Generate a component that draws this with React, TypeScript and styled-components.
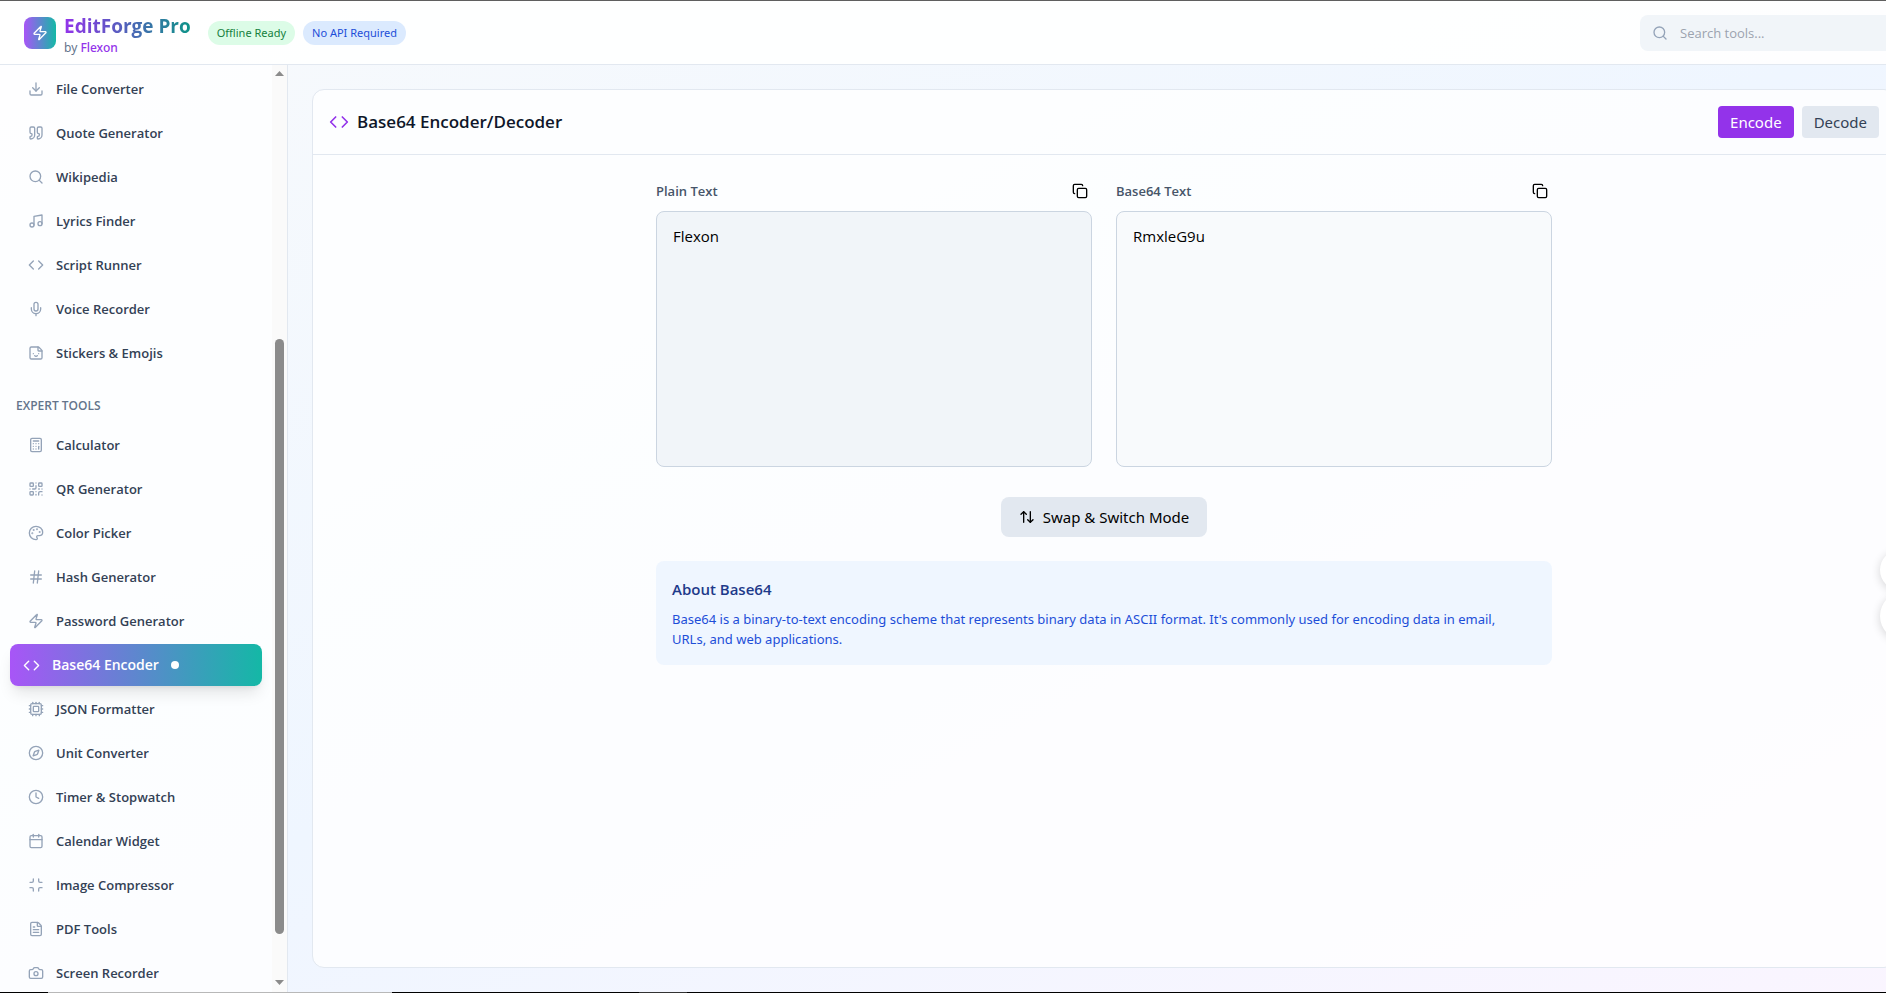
import React, { useState } from "react";
import styled, { createGlobalStyle, css } from "styled-components";
import {
  ArrowUpDown,
  Calculator,
  Calendar,
  Camera,
  Clock,
  Code,
  Compass,
  Copy,
  Cpu,
  Download,
  FileText,
  Hash,
  Mic,
  Minimize,
  Music,
  Palette,
  QrCode,
  Quote,
  Search,
  Sticker,
  Zap,
  type LucideIcon,
} from "lucide-react";

const headingFont = `"Segoe UI", "Open Sans", "Noto Sans", sans-serif`;
const textFont = `"Segoe UI", "Noto Sans", "Open Sans", sans-serif`;

const GlobalStyle = createGlobalStyle`
  *, *::before, *::after { box-sizing: border-box; }
  body {
    margin: 0;
    overflow: hidden;
    font-family: ${headingFont};
    font-size: 15px;
    line-height: 24px;
    color: #0f172a;
  }
  button, input, textarea { font: inherit; color: inherit; }
  button { border: 0; cursor: pointer; }
  h1, h2, h3, p, ul { margin: 0; padding: 0; }
  ul { list-style: none; }
  svg { flex: none; display: block; }
`;

const Viewport = styled.div`
  position: relative;
  height: 100vh;
  overflow: hidden;
  display: flex;
  flex-direction: column;
  border-top: 1px solid #5f5f5f;
`;

/* The application is a little wider than the window that shows it. */
const Shell = styled.div`
  width: calc(100% + 34px);
  flex: 1;
  min-height: 0;
  display: flex;
  flex-direction: column;
  background: linear-gradient(to bottom right, #f8fafc, #eff6ff, #faf5ff);
`;

const Header = styled.header`
  flex: none;
  height: 64px;
  padding: 0 24px;
  display: flex;
  align-items: center;
  justify-content: space-between;
  background: rgba(255, 255, 255, 0.9);
  border-bottom: 1px solid #e2e8f0;
`;

const Brand = styled.div`
  display: flex;
  align-items: center;
  gap: 17px;
`;

const BrandName = styled.div`
  display: flex;
  align-items: center;
  gap: 8px;
`;

const BrandText = styled.div`
  padding-top: 2px;
`;

const Logo = styled.div`
  width: 32px;
  height: 32px;
  display: grid;
  place-items: center;
  border-radius: 8px;
  color: #fff;
  background: linear-gradient(to right, #a855f7, #14b8a6);
`;

const Title = styled.h1`
  font-size: 19px;
  line-height: 28px;
  font-weight: 700;
  color: transparent;
  background: linear-gradient(to right, #9333ea, #0d9488);
  background-clip: text;
  -webkit-background-clip: text;
`;

const Byline = styled.p`
  font-family: ${textFont};
  font-size: 12px;
  line-height: 16px;
  color: #64748b;
`;

const Author = styled.span`
  font-weight: 500;
  color: #9333ea;
`;

const Badges = styled.div`
  display: flex;
  gap: 8px;
`;

const Badge = styled.span<{ $tone: "green" | "blue" }>`
  padding: 4px 9px;
  border-radius: 12px;
  font-family: ${textFont};
  font-size: 11px;
  line-height: 16px;
  ${(p) =>
    p.$tone === "green"
      ? css`background: #dcfce7; color: #15803d;`
      : css`background: #dbeafe; color: #1d4ed8;`}
`;

const SearchBox = styled.label`
  width: 256px;
  height: 36px;
  padding: 0 12px;
  display: flex;
  align-items: center;
  gap: 12px;
  border-radius: 8px;
  background: #f1f5f9;
  color: #94a3b8;
`;

const SearchInput = styled.input`
  flex: 1;
  min-width: 0;
  padding: 0;
  border: 0;
  outline: 0;
  background: transparent;
  color: #0f172a;
  font-size: 13px;
  line-height: 20px;
  &::placeholder { color: #9ca3af; opacity: 1; }
`;

const Body = styled.div`
  flex: 1;
  min-height: 0;
  display: flex;
`;

const Sidebar = styled.aside`
  flex: none;
  width: 288px;
  display: flex;
  overflow: hidden;
  background: rgba(255, 255, 255, 0.8);
  border-right: 1px solid #e2e8f0;
`;

const Nav = styled.nav`
  flex: 1;
  padding: 4px 16px 0;
`;

const NavList = styled.ul`
  display: flex;
  flex-direction: column;
  gap: 4px;
`;

const NavHeading = styled.h3`
  margin: 25px 0 11px;
  font-size: 12px;
  line-height: 16px;
  font-weight: 600;
  text-transform: uppercase;
  color: #64748b;
`;

const NavButton = styled.button<{ $active: boolean }>`
  width: 100%;
  height: 40px;
  padding: 0 12px;
  display: flex;
  align-items: center;
  gap: 12px;
  border-radius: 8px;
  background: transparent;
  color: #94a3b8;
  font-size: 13px;
  line-height: 20px;
  font-weight: 600;
  text-align: left;
  ${(p) =>
    p.$active &&
    css`
      width: 252px;
      height: 42px;
      margin: -1px -6px;
      padding: 0 13px;
      color: #fff;
      font-size: 14px;
      background: linear-gradient(to right, #a855f7, #14b8a6);
      box-shadow: 0 10px 15px -3px rgba(0, 0, 0, 0.1), 0 4px 6px -4px rgba(0, 0, 0, 0.1);
    `}
`;

const NavLabel = styled.span<{ $active: boolean }>`
  color: ${(p) => (p.$active ? "#fff" : "#334155")};
`;

const ActiveDot = styled.span`
  width: 8px;
  height: 8px;
  border-radius: 50%;
  background: #fff;
`;

const ScrollTrack = styled.div`
  flex: none;
  width: 15px;
  padding: 6px 3px 7px;
  display: flex;
  flex-direction: column;
  align-items: center;
  background: #fafafa;
  color: #8b8b8b;
`;

const ScrollRange = styled.div`
  flex: 1;
  width: 9px;
  margin: 4px 0;
  display: grid;
  grid-template-rows: 259fr 595fr 42fr;
`;

const ScrollThumb = styled.div`
  grid-row: 2;
  border-radius: 5px;
  background: #8b8b8b;
`;

const Main = styled.main`
  flex: 1;
  min-width: 0;
  padding: 24px;
  display: flex;
`;

const Card = styled.section`
  flex: 1;
  min-width: 0;
  border: 1px solid #e2e8f0;
  border-radius: 12px;
  background: rgba(255, 255, 255, 0.8);
`;

const CardHeader = styled.div`
  padding: 16px;
  display: flex;
  align-items: center;
  justify-content: space-between;
  border-bottom: 1px solid #e2e8f0;
`;

const CardTitle = styled.div`
  display: flex;
  align-items: center;
  gap: 8px;
  color: #9333ea;
  h2 {
    font-size: 17px;
    line-height: 28px;
    font-weight: 600;
    color: #0f172a;
  }
`;

const ModeGroup = styled.div`
  display: flex;
  gap: 8px;
`;

const ModeButton = styled.button<{ $active: boolean }>`
  padding: 4px 12px;
  border-radius: 4px;
  font-family: ${textFont};
  background: ${(p) => (p.$active ? "#9333ea" : "#e2e8f0")};
  color: ${(p) => (p.$active ? "#fff" : "#334155")};
`;

const Content = styled.div`
  max-width: 944px;
  margin: 0 auto;
  padding: 24px;
  display: flex;
  flex-direction: column;
  gap: 24px;
`;

const Fields = styled.div`
  display: grid;
  grid-template-columns: 1fr 1fr;
  gap: 24px;
  padding-bottom: 6px;
`;

const Field = styled.div`
  display: flex;
  flex-direction: column;
  gap: 8px;
`;

const FieldTop = styled.div`
  display: flex;
  align-items: center;
  justify-content: space-between;
  label {
    font-size: 13px;
    line-height: 20px;
    font-weight: 600;
    color: #475569;
  }
`;

const IconButton = styled.button`
  padding: 4px;
  background: transparent;
  color: #000;
`;

const TextBox = styled.textarea<{ $filled: boolean }>`
  display: block;
  width: 100%;
  height: 256px;
  padding: 12px 16px;
  border: 1px solid #cbd5e1;
  border-radius: 8px;
  outline: 0;
  resize: none;
  background: ${(p) => (p.$filled ? "#f1f5f9" : "#f8fafc")};
  color: #000;
`;

const SwapButton = styled.button`
  align-self: center;
  padding: 8px 18px;
  display: flex;
  align-items: center;
  gap: 8px;
  border-radius: 8px;
  font-family: ${textFont};
  background: #e2e8f0;
  color: #000;
`;

const About = styled.section`
  padding: 16px;
  border-radius: 8px;
  background: #eff6ff;
  h3 {
    margin-bottom: 8px;
    font-size: 15px;
    line-height: 24px;
    font-weight: 600;
    color: #1e3a8a;
  }
  p {
    padding-right: 16px;
    font-family: ${textFont};
    font-size: 13px;
    line-height: 20px;
    color: #1d4ed8;
  }
`;

const FloatingStack = styled.div`
  position: absolute;
  top: 549px;
  left: calc(100% - 6px);
  display: flex;
  flex-direction: column;
  align-items: flex-start;
  gap: 2px;
`;

const FloatingButton = styled.button<{ $size: number }>`
  width: ${(p) => p.$size}px;
  height: ${(p) => p.$size}px;
  padding: 0;
  border-radius: 50%;
  background: #fff;
  box-shadow: 0 2px 10px rgba(0, 0, 0, 0.16);
`;

const BottomEdge = styled.div`
  flex: none;
  height: 1px;
  background: linear-gradient(
    to right,
    #000 48px,
    #b8b8b8 48px 392px,
    #000 392px 639px,
    #333 639px 687px,
    #000 687px
  );
`;

type Tool = { name: string; icon: LucideIcon };

const mediaTools: Tool[] = [
  { name: "File Converter", icon: Download },
  { name: "Quote Generator", icon: Quote },
  { name: "Wikipedia", icon: Search },
  { name: "Lyrics Finder", icon: Music },
  { name: "Script Runner", icon: Code },
  { name: "Voice Recorder", icon: Mic },
  { name: "Stickers & Emojis", icon: Sticker },
];

const expertTools: Tool[] = [
  { name: "Calculator", icon: Calculator },
  { name: "QR Generator", icon: QrCode },
  { name: "Color Picker", icon: Palette },
  { name: "Hash Generator", icon: Hash },
  { name: "Password Generator", icon: Zap },
  { name: "Base64 Encoder", icon: Code },
  { name: "JSON Formatter", icon: Cpu },
  { name: "Unit Converter", icon: Compass },
  { name: "Timer & Stopwatch", icon: Clock },
  { name: "Calendar Widget", icon: Calendar },
  { name: "Image Compressor", icon: Minimize },
  { name: "PDF Tools", icon: FileText },
  { name: "Screen Recorder", icon: Camera },
];

function ToolList({
  tools,
  current,
  onSelect,
}: {
  tools: Tool[];
  current: string;
  onSelect: (name: string) => void;
}) {
  return (
    <NavList>
      {tools.map(({ name, icon: Icon }) => {
        const active = name === current;
        return (
          <li key={name}>
            <NavButton type="button" $active={active} onClick={() => onSelect(name)}>
              <Icon size={active ? 17 : 16} />
              <NavLabel $active={active}>{name}</NavLabel>
              {active && <ActiveDot />}
            </NavButton>
          </li>
        );
      })}
    </NavList>
  );
}

export default function App() {
  const [current, setCurrent] = useState("Base64 Encoder");
  const [mode, setMode] = useState<"Encode" | "Decode">("Encode");
  const [plain, setPlain] = useState("Flexon");
  const [encoded, setEncoded] = useState("RmxleG9u");

  return (
    <Viewport>
      <GlobalStyle />
      <Shell>
        <Header>
          <Brand>
            <BrandName>
              <Logo>
                <Zap size={16} />
              </Logo>
              <BrandText>
                <Title>EditForge Pro</Title>
                <Byline>
                  by <Author>Flexon</Author>
                </Byline>
              </BrandText>
            </BrandName>
            <Badges>
              <Badge $tone="green">Offline Ready</Badge>
              <Badge $tone="blue">No API Required</Badge>
            </Badges>
          </Brand>
          <SearchBox>
            <Search size={16} />
            <SearchInput type="text" aria-label="Search tools" placeholder="Search tools..." />
          </SearchBox>
        </Header>
        <Body>
          <Sidebar>
            <Nav>
              <ToolList tools={mediaTools} current={current} onSelect={setCurrent} />
              <NavHeading>Expert Tools</NavHeading>
              <ToolList tools={expertTools} current={current} onSelect={setCurrent} />
            </Nav>
            <ScrollTrack aria-hidden="true">
              <svg width="9" height="5" viewBox="0 0 9 5">
                <path d="M0 5 4.500 0 9 5z" fill="currentColor" />
              </svg>
              <ScrollRange>
                <ScrollThumb />
              </ScrollRange>
              <svg width="9" height="5" viewBox="0 0 9 5">
                <path d="M0 0 4.500 5 9 0z" fill="currentColor" />
              </svg>
            </ScrollTrack>
          </Sidebar>
          <Main>
            <Card>
              <CardHeader>
                <CardTitle>
                  <Code size={20} />
                  <h2>Base64 Encoder/Decoder</h2>
                </CardTitle>
                <ModeGroup>
                  {(["Encode", "Decode"] as const).map((m) => (
                    <ModeButton key={m} type="button" $active={mode === m} onClick={() => setMode(m)}>
                      {m}
                    </ModeButton>
                  ))}
                </ModeGroup>
              </CardHeader>
              <Content>
                <Fields>
                  <Field>
                    <FieldTop>
                      <label htmlFor="plain">Plain Text</label>
                      <IconButton type="button" aria-label="Copy plain text">
                        <Copy size={16} />
                      </IconButton>
                    </FieldTop>
                    <TextBox
                      id="plain"
                      $filled
                      value={plain}
                      onChange={(e) => setPlain(e.target.value)}
                    />
                  </Field>
                  <Field>
                    <FieldTop>
                      <label htmlFor="encoded">Base64 Text</label>
                      <IconButton type="button" aria-label="Copy Base64 text">
                        <Copy size={16} />
                      </IconButton>
                    </FieldTop>
                    <TextBox
                      id="encoded"
                      $filled={false}
                      value={encoded}
                      onChange={(e) => setEncoded(e.target.value)}
                    />
                  </Field>
                </Fields>
                <SwapButton
                  type="button"
                  onClick={() => setMode(mode === "Encode" ? "Decode" : "Encode")}
                >
                  <ArrowUpDown size={16} />
                  Swap &amp; Switch Mode
                </SwapButton>
                <About>
                  <h3>About Base64</h3>
                  <p>
                    Base64 is a binary-to-text encoding scheme that represents binary data in ASCII
                    format. It's commonly used for encoding data in email, URLs, and web
                    applications.
                  </p>
                </About>
              </Content>
            </Card>
          </Main>
        </Body>
      </Shell>
      <BottomEdge />
      <FloatingStack>
        <FloatingButton type="button" $size={40} aria-label="Open assistant" />
        <FloatingButton type="button" $size={48} aria-label="Open quick actions" />
      </FloatingStack>
    </Viewport>
  );
}
